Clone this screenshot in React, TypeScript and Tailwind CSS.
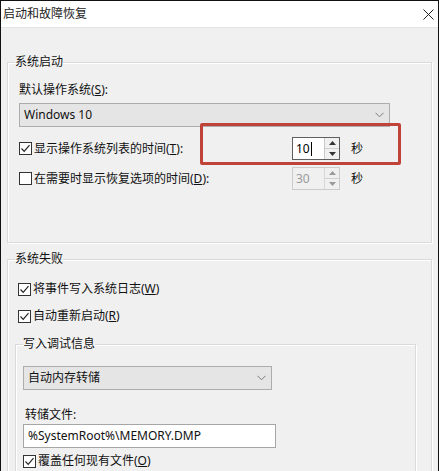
import type { ReactNode } from "react";

const font = "font-['Noto_Sans','Noto_Sans_CJK_SC',sans-serif]";

function Check({ on }: { on: boolean }) {
  return (
    <span className="w-[13px] h-[13px] shrink-0 border border-[#333] bg-white flex items-center justify-center">
      {on && (
        <svg width="11" height="11" viewBox="0 0 11 11">
          <polyline points="1.5,5.5 4.2,8.3 9.5,2.2" fill="none" stroke="#222" strokeWidth="1.2" />
        </svg>
      )}
    </span>
  );
}

function CheckRow({ on, children, className = "" }: { on: boolean; children: ReactNode; className?: string }) {
  return (
    <div className={`flex items-center gap-[2px] h-[16px] ${className}`}>
      <Check on={on} />
      <span className="leading-[16px] whitespace-nowrap">{children}</span>
    </div>
  );
}

function Chevron() {
  return (
    <svg width="9" height="6" viewBox="0 0 9 6">
      <polyline points="0.5,0.8 4.5,4.8 8.5,0.8" fill="none" stroke="#7a7a7a" strokeWidth="1" />
    </svg>
  );
}

function Select({ value, w }: { value: string; w: string }) {
  return (
    <div className={`${w} h-[24px] bg-[#e5e5e5] border border-[#adadad] flex items-center justify-between pl-[4px] pr-[5px]`}>
      <span className="leading-[16px]">{value}</span>
      <Chevron />
    </div>
  );
}

function Spinner({ value, disabled }: { value: string; disabled?: boolean }) {
  const arrow = disabled ? "#9a9a9a" : "#333";
  return (
    <div
      className={`w-[48px] h-[23px] flex border ${
        disabled ? "border-[#cccccc] bg-[#f0f0f0] text-[#9a9a9a]" : "border-[#5f5f5f] bg-white text-black"
      }`}
    >
      <div className="flex-1 flex items-center pl-[3px] leading-[16px]">
        {value}
        {!disabled && <span className="ml-[1px] w-px h-[14px] bg-black" />}
      </div>
      <div className={`w-[15px] flex flex-col border-l ${disabled ? "border-[#d8d8d8]" : "border-[#c8c8c8]"} bg-[#f0f0f0]`}>
        <div className="flex-1 flex items-center justify-center border-b border-[#d0d0d0]">
          <svg width="7" height="4" viewBox="0 0 7 4">
            <polygon points="0,4 3.5,0 7,4" fill={arrow} />
          </svg>
        </div>
        <div className="flex-1 flex items-center justify-center">
          <svg width="7" height="4" viewBox="0 0 7 4">
            <polygon points="0,0 3.5,4 7,0" fill={arrow} />
          </svg>
        </div>
      </div>
    </div>
  );
}

export default function App() {
  return (
    <div className={`relative w-[439px] h-[471px] overflow-hidden bg-[#f0f0f0] border-x border-t border-[#111] text-[12px] text-[#111] ${font}`}>
      {/* 标题栏 */}
      <div className="h-[27px] bg-white flex items-center justify-between pl-[2px] pr-[4px] border-b border-[#e6e6e6]">
        <span className="leading-[16px] text-[#222]">启动和故障恢复</span>
        <svg width="11" height="11" viewBox="0 0 11 11" className="mr-[0px]">
          <line x1="0.5" y1="0.5" x2="10.5" y2="10.5" stroke="#222" strokeWidth="1" />
          <line x1="10.5" y1="0.5" x2="0.5" y2="10.5" stroke="#222" strokeWidth="1" />
        </svg>
      </div>

      <div className="pl-[6px]">
        {/* 系统启动 */}
        <fieldset className="mt-[26px] w-[425px] border border-[#dadada] shadow-[inset_1px_1px_0_#fff,1px_1px_0_#fff]">
          <legend className="ml-[7px] leading-[16px]">系统启动</legend>
          <div className="px-[11px] pt-[12px] pb-[52px]">
            <div className="leading-[16px]">
              默认操作系统(<u>S</u>):
            </div>
            <div className="mt-[5px]">
              <Select value="Windows 10" w="w-[371px]" />
            </div>
            <div className="mt-[10px] flex items-center h-[23px]">
              <div className="w-[273px]">
                <CheckRow on>
                  显示操作系统列表的时间(<u>T</u>):
                </CheckRow>
              </div>
              <Spinner value="10" />
              <span className="ml-[11px] leading-[16px]">秒</span>
            </div>
            <div className="mt-[7px] flex items-center h-[23px]">
              <div className="w-[273px]">
                <CheckRow on={false}>
                  在需要时显示恢复选项的时间(<u>D</u>):
                </CheckRow>
              </div>
              <Spinner value="30" disabled />
              <span className="ml-[11px] leading-[16px]">秒</span>
            </div>
          </div>
        </fieldset>

        {/* 系统失败 */}
        <fieldset className="mt-[8px] w-[425px] border border-[#dadada] shadow-[inset_1px_1px_0_#fff,1px_1px_0_#fff]">
          <legend className="ml-[7px] leading-[16px]">系统失败</legend>
          <div className="pl-[7px] pt-[14px] pb-[20px]">
            <CheckRow on className="ml-[3px]">
              将事件写入系统日志(<u>W</u>)
            </CheckRow>
            <CheckRow on className="ml-[3px] mt-[11px]">
              自动重新启动(<u>R</u>)
            </CheckRow>

            <fieldset className="mt-[12px] w-[401px] border border-[#dadada] shadow-[inset_1px_1px_0_#fff,1px_1px_0_#fff]">
              <legend className="ml-[7px] leading-[16px]">写入调试信息</legend>
              <div className="px-[7px] pt-[14px] pb-[20px]">
                <Select value="自动内存转储" w="w-[249px]" />
                <div className="mt-[17px] pl-[2px] leading-[16px]">转储文件:</div>
                <div className="mt-[1px] w-[253px] h-[24px] bg-white border border-[#a6a6a6] flex items-center pl-[4px] leading-[16px]">
                  %SystemRoot%\MEMORY.DMP
                </div>
                <CheckRow on className="mt-[5px]">
                  覆盖任何现有文件(<u>O</u>)
                </CheckRow>
              </div>
            </fieldset>
          </div>
        </fieldset>
      </div>

      {/* 红色标注框 */}
      <div className="absolute left-[199px] top-[122px] w-[201px] h-[42px] border-[3px] border-[#c0433a] rounded-[2px]" />
    </div>
  );
}
